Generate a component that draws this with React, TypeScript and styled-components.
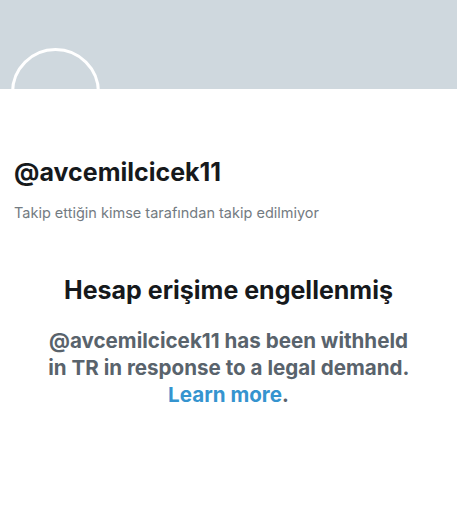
import React from "react";
import styled, { createGlobalStyle } from "styled-components";

const GlobalStyle = createGlobalStyle`
  html, body {
    margin: 0;
    padding: 0;
    background: #ffffff;
  }
  body {
    font-family: Inter, "Liberation Sans", Arial, sans-serif;
    -webkit-font-smoothing: antialiased;
  }
`;

const Page = styled.div`
  width: 457px;
  height: 507px;
  overflow: hidden;
  background: #ffffff;
`;

const Banner = styled.div`
  position: relative;
  height: 89px;
  background: #cfd8de;
`;

// empty avatar: only the white ring shows against the banner
const Avatar = styled.div`
  position: absolute;
  left: 11px;
  top: 48px;
  width: 89px;
  height: 89px;
  box-sizing: border-box;
  border-radius: 50%;
  border: 3px solid #ffffff;
`;

const Profile = styled.div`
  display: flex;
  flex-direction: column;
  padding: 68px 14px 0;
`;

const Handle = styled.div`
  font-size: 25px;
  font-weight: 700;
  line-height: 30px;
  color: #16191c;
`;

const FollowNote = styled.div`
  margin-top: 17px;
  font-size: 14.5px;
  line-height: 18px;
  color: #737b82;
`;

const Notice = styled.div`
  display: flex;
  flex-direction: column;
  align-items: center;
  padding: 53px 30px 0;
  text-align: center;
`;

const NoticeTitle = styled.h2`
  margin: 0;
  font-size: 25px;
  font-weight: 700;
  line-height: 30px;
  color: #16191c;
`;

const NoticeBody = styled.p`
  margin: 22px 0 0;
  max-width: 380px;
  font-size: 20.6px;
  font-weight: 700;
  line-height: 27px;
  color: #59636c;
`;

const LearnMore = styled.a`
  color: #3594cf;
  text-decoration: none;
  cursor: pointer;
`;

export default function App() {
  const handle = "@avcemilcicek11";
  return (
    <Page>
      <GlobalStyle />
      <Banner>
        <Avatar />
      </Banner>
      <Profile>
        <Handle>{handle}</Handle>
        <FollowNote>Takip ettiğin kimse tarafından takip edilmiyor</FollowNote>
      </Profile>
      <Notice>
        <NoticeTitle>Hesap erişime engellenmiş</NoticeTitle>
        <NoticeBody>
          {handle} has been withheld in TR in response to a legal demand.{" "}
          <LearnMore>Learn more</LearnMore>.
        </NoticeBody>
      </Notice>
    </Page>
  );
}
